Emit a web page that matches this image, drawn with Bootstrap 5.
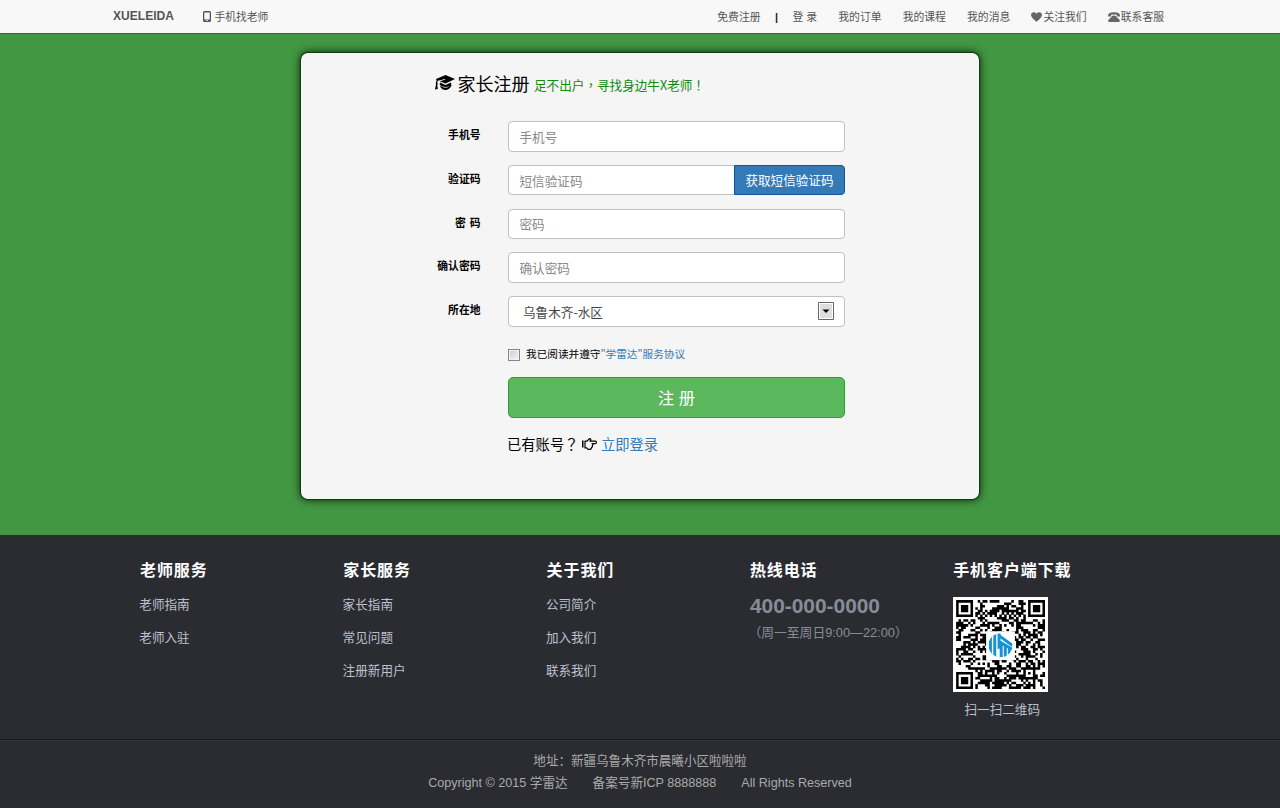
<!DOCTYPE html>
<html lang="zh-CN">
<head>
<meta charset="utf-8">
<title>家长注册</title>
<link href="https://cdn.jsdelivr.net/npm/bootstrap@5.3.0/dist/css/bootstrap.min.css" rel="stylesheet">
<style>
body{font-family:"Liberation Sans","Noto Sans CJK SC",sans-serif;font-size:12.6px;line-height:20px;color:#000;background:#2b2c31}
a{text-decoration:none}
svg{display:block;flex:none}
.topbar{height:34px;background:#f8f8f8;border-bottom:1px solid #118411;padding:0 116px 0 113px;font-size:10.8px;color:#555}
.topbar a{color:#555;line-height:34px;white-space:nowrap}
.topbar .brand{font-size:12.06px;font-weight:700;line-height:31px;margin-right:29px}
.phone-icon{margin-right:3.5px}
.menu{gap:21.2px}
.menu svg{margin-right:1px}
.divider{margin:0 14.5px}
.stage{height:501px;background:#429742;padding-top:19px}
.panel{width:678px;height:446px;background:#f5f5f5;border-radius:7px;box-shadow:0 0 1px 1px #0a3c0a,0 0 9px 1px rgba(0,0,0,.75);font-family:"Noto Sans CJK SC",sans-serif}
.title{height:68.3px;padding-left:133.5px}
.title svg{margin-top:22px}
.title h1{font-size:18px;line-height:24px;margin:18px 4.5px 0 3px;font-weight:400}
.title p{font-size:12.6px;color:#108a10;margin:22px 0 0}
.centered{font-family:"Noto Sans CJK TC",sans-serif}
.line{height:43.7px}
.line>label{width:179.5px;margin-right:27.5px;text-align:right;font-weight:700;font-size:10.8px;line-height:27px;word-spacing:1.5px}
.field{width:337px;position:relative}
.field .form-control{height:30.5px;padding:0 10.5px;font-size:12.6px;line-height:28px;border:1px solid #c1c1c1;border-radius:4px;color:#444;box-shadow:none}
.field .form-control::placeholder{color:#888}
.field .btn-code{width:111px;height:30.5px;padding:0;font-size:12.6px;line-height:20px;background:#337ab7;color:#fff;border:1px solid #0c549b;border-radius:0 4px 4px 0}
.field select.form-control{padding:1px 14px 0;appearance:none}
.arrow{position:absolute;right:11px;top:6px}
.below{padding-left:207px}
.agree{font-size:10.65px;height:20px;margin-top:4px}
.agree a,.login a{color:#337ab7}
.agree input{appearance:none;width:12px;height:12px;margin:5px 6px 0 0;border:1px solid #858585;background:linear-gradient(135deg,#c8ccd0,#f5f5f5);box-shadow:inset 0 0 0 1px #f4f4f4}
.btn-reg{width:337px;height:41px;margin-top:13.7px;padding:0 0 2px;background:#5cb85c;border:1px solid #2ca02c;border-radius:5px;color:#fff;font-size:16.2px;word-spacing:1px}
.login{font-size:14.3px;margin:16px 0 0 -1px}
.login svg{margin:0 3.5px 0 4px}
.foot{height:204px;padding-left:140px;color:#bcc0cf}
.foot section{width:203.3px}
.foot h2{font-size:16px;letter-spacing:.9px;font-weight:700;line-height:22px;color:#fff;margin:25px 0 12px}
.foot a{display:block;color:#bcc0cf;height:33px;line-height:22px;margin-left:-.7px}
.tel{font-size:20.9px;font-weight:700;color:#888c98;line-height:22px;margin-top:13px}
.hours{color:#888c98;line-height:20px;margin:6px 0 0 -1.5px;font-size:12.8px}
.qr{margin-top:15px}
.scan{margin:8px 0 0 11.3px}
.legal{border-top:1px solid #17181b;box-shadow:inset 0 1px #37383d;height:69px;padding-top:10px;color:#aaa;font-size:12.55px;line-height:22px}
.legal .row-b{gap:25px;font-size:12.6px}
</style>
</head>
<body>
<nav class="topbar d-flex align-items-center">
  <a class="brand" href="#">XUELEIDA</a>
  <a href="#" class="d-flex align-items-center"><svg class="phone-icon" width="8" height="11" viewBox="0 0 8 11"><path fill="#455a66" fill-rule="evenodd" d="M1.500 0h5Q8 0 8 1.500v8Q8 11 6.500 11h-5Q0 11 0 9.500v-8Q0 0 1.500 0zM1.300 1.500v7h5.400v-7zM3 9.300v.8h2v-.8z"/></svg>手机找老师</a>
  <div class="menu d-flex align-items-center ms-auto">
    <div class="d-flex align-items-center"><a href="#">免费注册</a><span class="divider text-dark fw-bold">|</span><a href="#">登 录</a></div>
    <a href="#">我的订单</a><a href="#">我的课程</a><a href="#">我的消息</a>
    <a href="#" class="d-flex align-items-center"><svg width="11" height="10" viewBox="0 0 11 10"><path fill="#666" d="M5.500 9.800Q0 5.700 0 2.800C0 0 4 -.8 5.500 1.800C7 -.8 11 0 11 2.800Q11 5.700 5.500 9.800z"/></svg>关注我们</a>
    <a href="#" class="d-flex align-items-center"><svg width="12" height="10" viewBox="0 0 12 10"><path fill="#666" fill-rule="evenodd" d="M0 3.700Q0 .3 6 .3T12 3.700l-.3.700H9V2.800Q6 2 3 2.800v1.600H.3zM4 4q2-.8 4 0l1 1.400 2.600 2.300V10H.4V7.700L3 5.400z"/></svg>联系客服</a>
  </div>
</nav>
<main class="stage">
  <form class="panel mx-auto">
    <div class="title d-flex">
      <svg width="20" height="17" viewBox="0 0 20 17"><path d="M10.500 0L20 4l-9.500 4.500-5.800-2.300 5.500-1.500-.3-.8-7 1.800-.8 1.500.8 1.500-.6 1 .5 4.300L0 14.500l1-5.300L.800 7.500l.8-2L1 4z"/><path d="M5 7.400l5.500 2.500L16 7.400l.4 3.700q-2.500 3.900-5.900 3.900T5 11.500l.8-.5q2.200 1.700 4.700 1.700 2.600 0 4.300-1.600-2.300 1-4.300 1Q7.600 12 4.700 10z"/></svg>
      <h1>家长注册</h1><p>足不出户<span class="centered" lang="zh-TW">，</span>寻找身边牛X老师<span class="centered" lang="zh-TW">！</span></p>
    </div>
    <div class="line d-flex"><label>手机号</label><div class="field"><input class="form-control" placeholder="手机号"></div></div>
    <div class="line d-flex"><label>验证码</label><div class="field"><div class="input-group flex-nowrap"><input class="form-control" placeholder="短信验证码"><button type="button" class="btn btn-code">获取短信验证码</button></div></div></div>
    <div class="line d-flex"><label>密 码</label><div class="field"><input class="form-control" placeholder="密码"></div></div>
    <div class="line d-flex"><label>确认密码</label><div class="field"><input class="form-control" placeholder="确认密码"></div></div>
    <div class="line d-flex"><label>所在地</label><div class="field"><select class="form-control"><option>乌鲁木齐-水区</option></select>
      <svg class="arrow" width="16" height="18" viewBox="0 0 16 18"><path fill="#fff" stroke="#666" d="M.5.500h15v17H.5z"/><path fill="#dedede" d="M2 2h12v14H2z"/><path d="M4.500 7.500h7L8 11z"/></svg></div></div>
    <div class="below">
      <div class="agree d-flex"><input type="checkbox"><span>我已阅读并遵守<a href="#">"学雷达"服务协议</a></span></div>
      <button type="button" class="btn btn-reg d-block">注 册</button>
      <div class="login d-flex align-items-center">已有账号<span class="centered" lang="zh-TW">？</span><svg width="15" height="12" viewBox="0 0 15 12"><path d="M0 2.500h1.500v7H0z"/><path fill="none" stroke="#000" stroke-width="1.200" stroke-linejoin="round" d="M3 3.200h1.800L7.500.7q1.600-.2 1.200 1.400L8 3.200h5.300q1.100.1 1.100 1.200t-1.100 1.200H10q1 .3.900 1.200-.1.700-.6.900.4 1.400-.8 1.900-.1 1.700-1.700 1.700H6.100L4.700 9.900H3z"/></svg><a href="#">立即登录</a></div>
    </div>
  </form>
</main>
<footer>
  <div class="foot d-flex">
    <section><h2>老师服务</h2><a href="#">老师指南</a><a href="#">老师入驻</a></section>
    <section><h2>家长服务</h2><a href="#">家长指南</a><a href="#">常见问题</a><a href="#">注册新用户</a></section>
    <section><h2>关于我们</h2><a href="#">公司简介</a><a href="#">加入我们</a><a href="#">联系我们</a></section>
    <section><h2>热线电话</h2><div class="tel">400-000-0000</div><div class="hours">（周一至周日9:00—22:00）</div></section>
    <section><h2>手机客户端下载</h2>
      <svg class="qr" width="95" height="95" viewBox="-1.300 -1.300 39.600 39.600"><path fill="#fff" d="M-1.300-1.300h39.600v39.600h-39.600z"/><path id="modules" fill="#000"/>
        <path fill="#fff" d="M12.500 13h12v12h-12z"/>
        <g transform="translate(18.500 18.800)"><clipPath id="disc"><circle r="5"/></clipPath><g clip-path="url(#disc)" stroke="#1593d5" stroke-width="1.250" fill="none"><path d="M-4.200-5V5M-2.400-5V5M-.6-5V1.500M-.600-4L5 .1M-.6-1.500L5 1.800M.3-.5V5M2 .2V5M3.700 1V5"/></g></g>
      </svg>
      <div class="scan">扫一扫二维码</div></section>
  </div>
  <div class="legal">
    <div class="text-center">地址：新疆乌鲁木齐市晨曦小区啦啦啦</div>
    <div class="row-b d-flex justify-content-center"><span>Copyright © 2015 学雷达</span><span>备案号新ICP 8888888</span><span>All Rights Reserved</span></div>
  </div>
</footer>
<script>
// 37x37 code: finder, timing and alignment patterns, then data modules
const N=37;let seed=2015,d='';
const rnd=()=>(seed=(seed*1103515245+12345)%2147483648)/2147483648;
const ring=(x,y,cx,cy)=>Math.max(Math.abs(x-cx),Math.abs(y-cy));
for(let y=0;y<N;y++)for(let x=0;x<N;x++){
  let on=rnd()<.52;
  if(x===6||y===6)on=(x+y)%2===0;
  for(const [cx,cy] of [[3,3],[33,3],[3,33]]){const r=ring(x,y,cx,cy);if(r<=4)on=r!==4&&r!==2;}
  const a=ring(x,y,30,30);if(a<=2)on=a!==1;
  if(on)d+=`M${x} ${y}h1.050v1.050h-1.050z`;
}
document.getElementById('modules').setAttribute('d',d);
</script>
<script src="https://cdn.jsdelivr.net/npm/bootstrap@5.3.0/dist/js/bootstrap.bundle.min.js"></script>
</body>
</html>
